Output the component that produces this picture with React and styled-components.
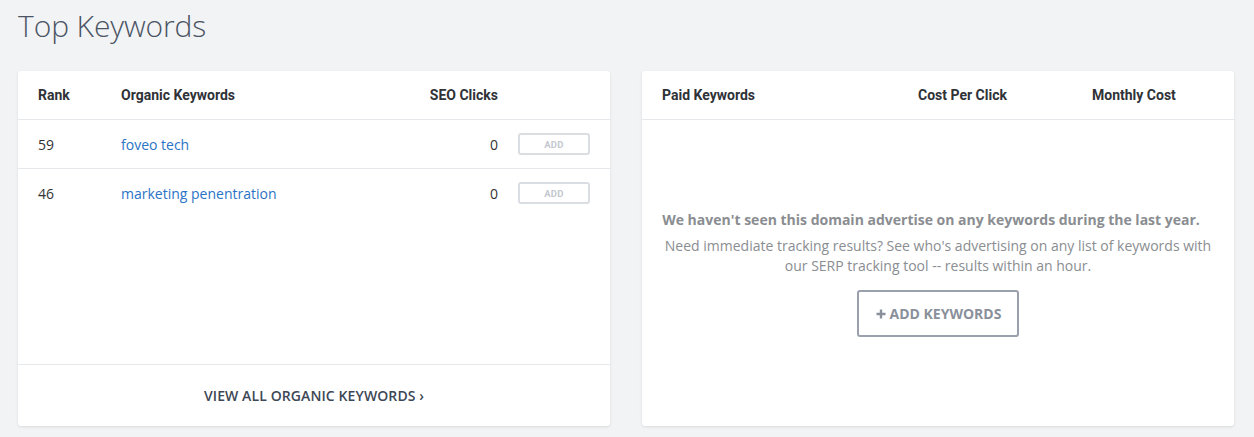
import styled, { createGlobalStyle } from "styled-components";

const Global = createGlobalStyle`
  html, body { margin:0; padding:0; background:#f2f3f5; }
  body { font-family:"Open Sans", "Liberation Sans", sans-serif; }
`;

const Page = styled.div`
  width:1254px; height:437px; box-sizing:border-box;
  padding:6px 20px 0 18px;
`;

const Title = styled.h1`
  margin:0 0 25px; font-weight:300; font-size:30px; line-height:40px;
  color:#4a5464; letter-spacing:-0.1px;
`;

const Grid = styled.div`
  display:grid; grid-template-columns:592px 592px; gap:32px;
`;

const Card = styled.section`
  background:#fff; border-radius:3px; height:355px;
  box-shadow:0 1px 3px rgba(0,0,0,0.1);
  display:flex; flex-direction:column;
`;

const HeadRow = styled.div`
  display:grid; grid-template-columns:${p => p.$cols}; align-items:center;
  height:48px; padding:0 20px; border-bottom:1px solid #e6e8eb;
  font-family:Roboto, "Liberation Sans", sans-serif; font-weight:700;
  font-size:14px; color:#2f3237;
`;

const Row = styled.div`
  display:grid; grid-template-columns:${p => p.$cols}; align-items:center;
  height:48px; padding:0 20px; font-size:14px; color:#333;
  border-bottom:${p => (p.$last ? "none" : "1px solid #e6e8eb")};
`;

const Right = styled.span` text-align:right; `;

const Link = styled.a`
  color:#2a73c5; text-decoration:none; cursor:pointer;
`;

const AddButton = styled.button`
  justify-self:end; width:72px; height:22px; box-sizing:border-box;
  border:2px solid #dadde2; border-radius:3px; background:#fff;
  font-family:Roboto, "Liberation Sans", sans-serif; font-weight:700;
  font-size:9.5px; color:#c4c8ce; padding:0; letter-spacing:0.3px;
`;

const Spacer = styled.div` flex:1; `;

const Footer = styled.div`
  height:61px; border-top:1px solid #e6e8eb;
  display:flex; align-items:center; justify-content:center;
  font-size:14px; font-weight:600; color:#3d4756; letter-spacing:0.1px;
`;

const Empty = styled.div`
  flex:1; display:flex; flex-direction:column; align-items:center;
  padding-top:90px; text-align:center; color:#8a8d91;
`;

const EmptyTitle = styled.p`
  margin:0 0 6px; padding-right:14px; font-weight:700; font-size:14px; line-height:20px;
`;

const EmptyText = styled.p`
  margin:0 0 14px; font-size:14px; line-height:20px; max-width:560px;
`;

const OutlineButton = styled.button`
  width:162px; height:47px; box-sizing:border-box;
  display:flex; align-items:center; justify-content:center; gap:4px;
  border:2px solid #9aa1ad; border-radius:3px; background:#fff;
  font-family:"Open Sans", "Liberation Sans", sans-serif; font-weight:700;
  font-size:14px; color:#8a909b; padding:0 0 0 1px;
`;

const Plus = styled.svg`
  width:10px; height:10px; display:block;
`;

const organicCols = "83px 1fr 150px 92px";
const paidCols = "256px 174px 1fr";

const organic = [
  { rank: 59, keyword: "foveo tech", clicks: 0 },
  { rank: 46, keyword: "marketing penentration", clicks: 0 },
];

export default function App() {
  return (
    <Page>
      <Global />
      <Title>Top Keywords</Title>
      <Grid>
        <Card>
          <HeadRow $cols={organicCols}>
            <span>Rank</span>
            <span>Organic Keywords</span>
            <Right>SEO Clicks</Right>
            <span />
          </HeadRow>
          {organic.map((k, i) => (
            <Row key={k.keyword} $cols={organicCols} $last={i === organic.length - 1}>
              <span>{k.rank}</span>
              <Link>{k.keyword}</Link>
              <Right>{k.clicks}</Right>
              <AddButton>ADD</AddButton>
            </Row>
          ))}
          <Spacer />
          <Footer>VIEW ALL ORGANIC KEYWORDS ›</Footer>
        </Card>
        <Card>
          <HeadRow $cols={paidCols}>
            <span>Paid Keywords</span>
            <span>Cost Per Click</span>
            <span>Monthly Cost</span>
          </HeadRow>
          <Empty>
            <EmptyTitle>We haven't seen this domain advertise on any keywords during the last year.</EmptyTitle>
            <EmptyText>
              Need immediate tracking results? See who's advertising on any list of keywords with our SERP tracking tool -- results within an hour.
            </EmptyText>
            <OutlineButton>
              <Plus viewBox="0 0 10 10" aria-hidden="true">
                <path d="M5 0.5v9M0.5 5h9" stroke="currentColor" strokeWidth="2.4" fill="none" />
              </Plus>
              ADD KEYWORDS
            </OutlineButton>
          </Empty>
        </Card>
      </Grid>
    </Page>
  );
}
